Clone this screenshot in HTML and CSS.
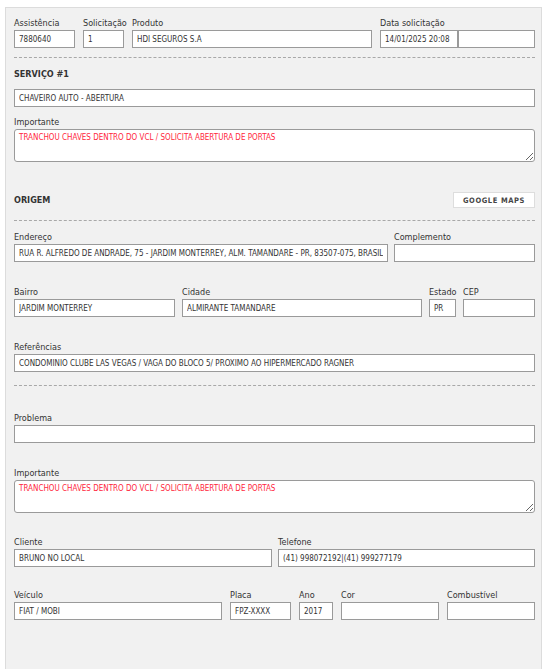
FILE: index.html
```html
<!DOCTYPE html>
<html lang="pt-BR">
<head>
<meta charset="utf-8">
<title>Assistência</title>
<link rel="stylesheet" href="styles.css">
</head>
<body>
<div class="panel">
  <div class="row row-top">
    <div class="field"><label class="lbl">Assistência</label><input class="inp" value="7880640" readonly></div>
    <div class="field"><label class="lbl">Solicitação</label><input class="inp" value="1" readonly></div>
    <div class="field"><label class="lbl">Produto</label><input class="inp" value="HDI SEGUROS S.A" readonly></div>
    <div class="field"><label class="lbl">Data solicitação</label>
      <div class="pair"><input class="inp" value="14/01/2025 20:08" readonly><input class="inp" value="" readonly></div>
    </div>
  </div>
  <hr class="dash dash-1">
  <div class="section-title">SERVIÇO #1</div>
  <input class="inp inp-service" value="CHAVEIRO AUTO - ABERTURA" readonly>
  <div class="field field-imp1"><label class="lbl">Importante</label><textarea class="txt" readonly>TRANCHOU CHAVES DENTRO DO VCL / SOLICITA ABERTURA DE PORTAS</textarea></div>

  <div class="section-head">
    <div class="section-title">ORIGEM</div>
    <button class="btn" type="button">GOOGLE MAPS</button>
  </div>
  <hr class="dash dash-2">

  <div class="row row-end">
    <div class="field"><label class="lbl">Endereço</label><input class="inp" value="RUA R. ALFREDO DE ANDRADE, 75 - JARDIM MONTERREY, ALM. TAMANDARÉ - PR, 83507-075, BRASIL" readonly></div>
    <div class="field"><label class="lbl">Complemento</label><input class="inp" value="" readonly></div>
  </div>
  <div class="row row-bairro">
    <div class="field"><label class="lbl">Bairro</label><input class="inp" value="JARDIM MONTERREY" readonly></div>
    <div class="field"><label class="lbl">Cidade</label><input class="inp" value="ALMIRANTE TAMANDARÉ" readonly></div>
    <div class="field"><label class="lbl">Estado</label><input class="inp" value="PR" readonly></div>
    <div class="field"><label class="lbl">CEP</label><input class="inp" value="" readonly></div>
  </div>
  <div class="field field-ref"><label class="lbl">Referências</label><input class="inp" value="CONDOMINIO CLUBE LAS VEGAS / VAGA DO BLOCO 5/ PROXIMO AO HIPERMERCADO RAGNER" readonly></div>
  <hr class="dash dash-3">

  <div class="field field-prob"><label class="lbl">Problema</label><input class="inp" value="" readonly></div>
  <div class="field field-imp2"><label class="lbl">Importante</label><textarea class="txt" readonly>TRANCHOU CHAVES DENTRO DO VCL / SOLICITA ABERTURA DE PORTAS</textarea></div>

  <div class="row row-cli">
    <div class="field"><label class="lbl">Cliente</label><input class="inp" value="BRUNO NO LOCAL" readonly></div>
    <div class="field"><label class="lbl">Telefone</label><input class="inp" value="(41) 998072192|(41) 999277179" readonly></div>
  </div>
  <div class="row row-vei">
    <div class="field"><label class="lbl">Veículo</label><input class="inp" value="FIAT / MOBI" readonly></div>
    <div class="field"><label class="lbl">Placa</label><input class="inp" value="FPZ-XXXX" readonly></div>
    <div class="field"><label class="lbl">Ano</label><input class="inp" value="2017" readonly></div>
    <div class="field"><label class="lbl">Cor</label><input class="inp" value="" readonly></div>
    <div class="field"><label class="lbl">Combustível</label><input class="inp" value="" readonly></div>
  </div>
</div>
</body>
</html>
```

FILE: styles.css
```css
html, body {
  margin: 0;
  padding: 0;
  background: #ffffff;
}
body {
  font-family: "DejaVu Sans Condensed", "Liberation Sans", sans-serif;
  color: #333333;
  overflow: hidden;
}
.panel {
  margin: 7px 5px 0 5px;
  border: 1px solid #dcdcdc;
  border-bottom: none;
  background: #f1f1f1;
  padding: 9px 6px 0 8px;
  min-height: calc(100vh - 7px);
  box-sizing: border-box;
}
.row {
  display: grid;
}
.field {
  display: flex;
  flex-direction: column;
  min-width: 0;
}
.lbl {
  display: block;
  font-size: 9px;
  line-height: 13px;
  height: 13px;
  white-space: nowrap;
  color: #333333;
}
.inp {
  display: block;
  box-sizing: border-box;
  width: 100%;
  height: 18px;
  margin: 0;
  padding: 0 4px;
  border: 1px solid #9a9a9a;
  border-radius: 0;
  background: #ffffff;
  font-family: "DejaVu Sans Condensed", "Liberation Sans", sans-serif;
  font-size: 8px;
  color: #333333;
  outline: none;
}
.pair {
  display: grid;
  grid-template-columns: 78px 77px;
}
.txt {
  display: block;
  box-sizing: border-box;
  width: 100%;
  height: 33px;
  margin: 0;
  padding: 3px 4px;
  border: 1px solid #9a9a9a;
  border-radius: 3px;
  background: #ffffff;
  font-family: "DejaVu Sans Condensed", "Liberation Sans", sans-serif;
  font-size: 8px;
  line-height: 10px;
  color: #ff1f3d;
  outline: none;
}
.dash {
  margin: 0;
  height: 0;
  border: 0;
  border-top: 1px dashed #a8a8a8;
}
.section-title {
  font-size: 9px;
  font-weight: bold;
  line-height: 13px;
  color: #333333;
}
.section-head {
  display: flex;
  justify-content: space-between;
  align-items: center;
  height: 16px;
  margin-top: 30px;
}
.btn {
  box-sizing: border-box;
  width: 82px;
  height: 16px;
  margin: 0;
  padding: 0;
  border: 1px solid #dddddd;
  background: #ffffff;
  font-family: "DejaVu Sans Condensed", "Liberation Sans", sans-serif;
  font-size: 7.5px;
  font-weight: bold;
  letter-spacing: 0.6px;
  color: #454545;
}

.row-top {
  grid-template-columns: 61px 41px 240px 155px;
  column-gap: 8px;
}
.dash-1 { margin-top: 9px; }
.dash-1 + .section-title { margin-top: 10px; }
.inp-service { margin-top: 8px; }
.field-imp1 { margin-top: 9px; }
.dash-2 { margin-top: 12px; }
.row-end {
  grid-template-columns: 374px 141px;
  column-gap: 6px;
  margin-top: 10px;
}
.row-bairro {
  grid-template-columns: 161px 240px 27px 72px;
  column-gap: 7px;
  margin-top: 24px;
}
.field-ref { margin-top: 24px; }
.dash-3 { margin-top: 13px; }
.field-prob { margin-top: 26px; }
.field-imp2 { margin-top: 24px; }
.row-cli {
  grid-template-columns: 258px 257px;
  column-gap: 6px;
  margin-top: 23px;
}
.row-vei {
  grid-template-columns: 208px 61px 34px 98px 88px;
  column-gap: 8px;
  margin-top: 22px;
}
```
